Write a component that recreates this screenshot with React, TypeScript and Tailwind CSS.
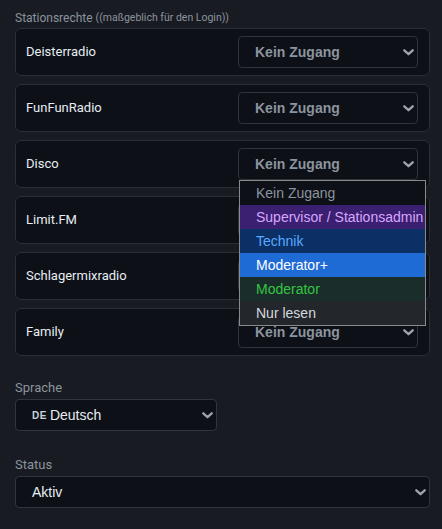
import React from "react";

const Chevron = () => (
  <svg width="11" height="7" viewBox="0 0 11 7" className="shrink-0">
    <path d="M1.3 1.3 L5.5 5.2 L9.7 1.3" fill="none" stroke="#9ca3af" strokeWidth="2.3" strokeLinecap="round" strokeLinejoin="round" />
  </svg>
);

const labelFont = { fontFamily: "Roboto, 'Noto Sans', sans-serif" };
const selFont = { fontFamily: "'Liberation Sans', Arial, sans-serif" };

function FakeSelect({ children, className = "" }: { children: React.ReactNode; className?: string }) {
  return (
    <div
      className={`flex h-8 items-center justify-between rounded-[4px] border border-[#30353d] bg-[#0d1016] pl-4 pr-[3px] text-[14px] ${className}`}
      style={selFont}
    >
      <div className="flex items-center">{children}</div>
      <Chevron />
    </div>
  );
}

const stations = ["Deisterradio", "FunFunRadio", "Disco", "Limit.FM", "Schlagermixradio", "Family"];

const options = [
  { t: "Kein Zugang", bg: "bg-[#0d1016]", c: "text-[#8b949e]" },
  { t: "Supervisor / Stationsadmin", bg: "bg-[#3b1f70]", c: "text-[#d8a6ff]" },
  { t: "Technik", bg: "bg-[#0b3066]", c: "text-[#58a9ff]" },
  { t: "Moderator+", bg: "bg-[#1f6bd6]", c: "text-white" },
  { t: "Moderator", bg: "bg-[#1a2d2a]", c: "text-[#35c641]" },
  { t: "Nur lesen", bg: "bg-[#23262b]", c: "text-[#d5d9de]" },
];

export default function App() {
  return (
    <div className="min-h-[529px] w-[442px] bg-[#181b21] pl-[15px] pr-[12px] pt-[8px]" style={labelFont}>
      <div className="flex h-[20px] items-center text-[12px] text-[#8b949e]">
        Stationsrechte<span className="ml-[3px] text-[10.5px]">((maßgeblich für den Login))</span>
      </div>
      <div className="flex flex-col gap-2">
        {stations.map((s, i) => (
          <div
            key={s}
            className="relative flex h-12 items-center justify-between rounded-[6px] border border-[#2b2f36] bg-[#0d1016] pl-[10px] pr-[11px]"
          >
            <span className="text-[13px] text-[#e6edf3]">{s}</span>
            <FakeSelect className="w-[180px]">
              <span className="font-bold text-[#8b949e]">Kein Zugang</span>
            </FakeSelect>
            {i === 2 && (
              <div
                className="absolute left-[223px] top-[39px] z-10 w-[187px] overflow-hidden border border-[#8a8a8a] bg-[#0d1016] text-[14px]"
                style={selFont}
              >
                {options.map((o) => (
                  <div key={o.t} className={`flex h-6 items-center whitespace-nowrap pl-4 ${o.bg} ${o.c}`}>
                    {o.t}
                  </div>
                ))}
              </div>
            )}
          </div>
        ))}
      </div>
      <div className="mt-[23px] flex h-[18px] items-center text-[13px] text-[#8b949e]">Sprache</div>
      <div className="mt-[2px]">
        <FakeSelect className="w-[202px]">
          <span className="mr-[3px] text-[10px] font-bold tracking-[0.5px] text-[#c9d1d9]">DE</span>
          <span className="text-[#e6edf3]">Deutsch</span>
        </FakeSelect>
      </div>
      <div className="mt-[25px] flex h-[18px] items-center text-[13px] text-[#8b949e]">Status</div>
      <div className="mt-[2px]">
        <FakeSelect className="w-full">
          <span className="text-[#e6edf3]">Aktiv</span>
        </FakeSelect>
      </div>
    </div>
  );
}
